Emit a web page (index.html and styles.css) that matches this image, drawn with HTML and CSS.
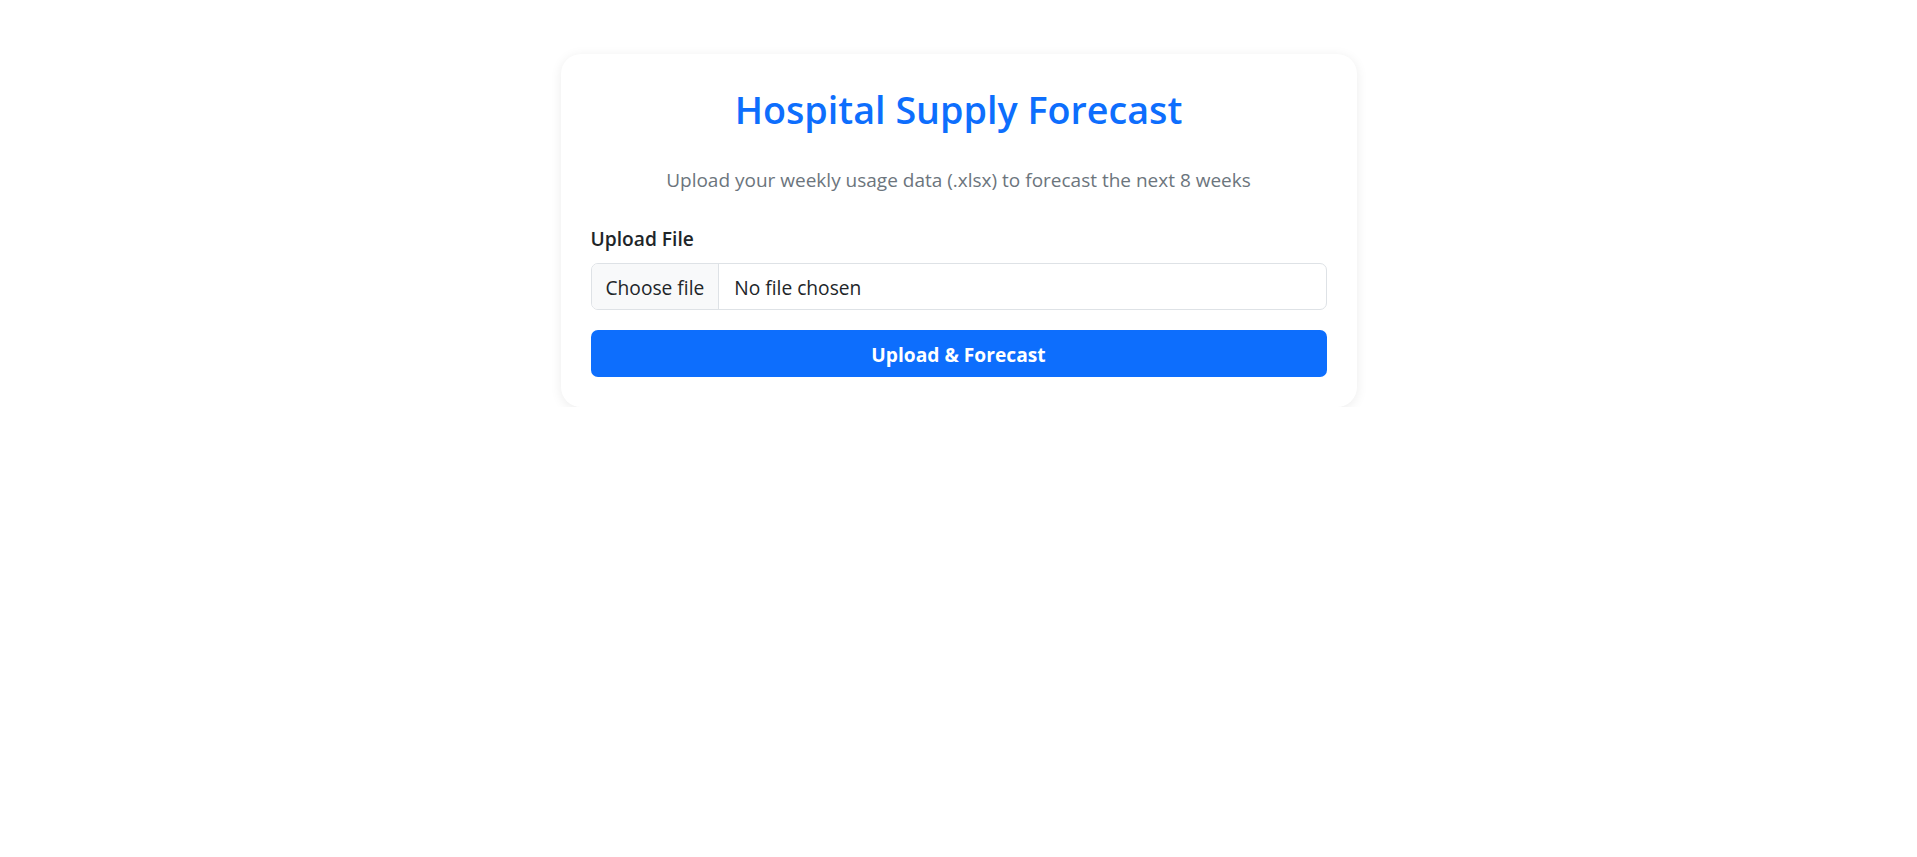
FILE: index.html
```html
<!DOCTYPE html>
<html lang="en">
<head>
<meta charset="utf-8">
<title>Hospital Supply Forecast</title>
<link rel="stylesheet" href="styles.css">
</head>
<body>
  <main class="page">
    <section class="card">
      <h2 class="title">Hospital Supply Forecast</h2>
      <p class="subtitle">Upload your weekly usage data (.xlsx) to forecast the next 8 weeks</p>
      <form class="upload-form">
        <label class="form-label" for="file">Upload File</label>
        <label class="file-input">
          <span class="file-btn">Choose file</span>
          <span class="file-name">No file chosen</span>
          <input id="file" class="file-native" type="file" accept=".xlsx">
        </label>
        <button type="button" class="btn-primary">Upload &amp; Forecast</button>
      </form>
    </section>
  </main>
</body>
</html>
```
FILE: styles.css
```css
* { box-sizing: border-box; }

html, body {
  margin: 0;
  padding: 0;
  background: #ffffff;
}

body {
  font-family: "Open Sans", "Noto Sans", "Liberation Sans", sans-serif;
  font-size: 19.2px;
  line-height: 1.5;
  color: #212529;
}

.page {
  display: flex;
  justify-content: center;
  padding-top: 54px;
}

.card {
  width: 796px;
  background: #ffffff;
  border-radius: 20px;
  box-shadow: 0 2px 12px rgba(0, 0, 0, 0.08);
  padding: 33px 30px 30px;
}

.title {
  margin: 0 0 32.5px;
  text-align: center;
  font-size: 37.7px;
  line-height: 46px;
  font-weight: 600;
  color: #0d6efd;
}

.subtitle {
  margin: 0 0 30.7px;
  text-align: center;
  color: #6c757d;
  font-size: 19px;
  line-height: 28.8px;
}

.upload-form {
  display: flex;
  flex-direction: column;
}

.form-label {
  display: block;
  font-weight: 600;
  line-height: 28.8px;
  margin-bottom: 8.8px;
  color: #212529;
}

.file-input {
  display: flex;
  align-items: stretch;
  height: 47px;
  border: 1px solid #dee2e6;
  border-radius: 7px;
  overflow: hidden;
  background: #ffffff;
  cursor: pointer;
  margin-bottom: 20px;
}

.file-btn {
  display: flex;
  align-items: center;
  padding: 4px 14px 0;
  background: #f8f9fa;
  border-right: 1px solid #dee2e6;
  color: #212529;
}

.file-name {
  display: flex;
  align-items: center;
  padding: 4px 0 0 15px;
  color: #212529;
}

.file-native {
  display: none;
}

.btn-primary {
  height: 47px;
  padding: 3px 0 0;
  border: 0;
  border-radius: 7px;
  background: #0d6efd;
  color: #ffffff;
  font-family: inherit;
  font-size: 19.2px;
  font-weight: 700;
  cursor: pointer;
}
```
